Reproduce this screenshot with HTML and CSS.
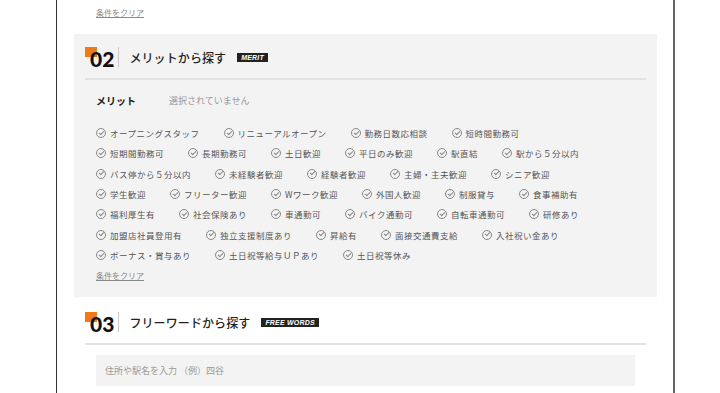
FILE: index.html
```html
<!DOCTYPE html>
<html>
<head>
  <meta charset="utf-8">
  <title>求人検索</title>
  <link rel="stylesheet" href="styles.css">
</head>
<body>
  <div class="page">
    <div class="prev-tail">
      <a class="clear-link" href="#">条件をクリア</a>
    </div>

    <section class="search-block is-gray">
      <div class="block-head">
        <span class="block-num">02</span>
        <h2 class="block-title">メリットから探す</h2>
        <span class="block-tag">MERIT</span>
      </div>
      <div class="block-body">
        <div class="picked">
          <span class="picked-label">メリット</span>
          <span class="picked-value">選択されていません</span>
        </div>
        <div class="check-list">
          <ul class="check-row">
            <li><i class="chk"></i>オープニングスタッフ</li>
            <li><i class="chk"></i>リニューアルオープン</li>
            <li><i class="chk"></i>勤務日数応相談</li>
            <li><i class="chk"></i>短時間勤務可</li>
          </ul>
          <ul class="check-row">
            <li><i class="chk"></i>短期間勤務可</li>
            <li><i class="chk"></i>長期勤務可</li>
            <li><i class="chk"></i>土日歓迎</li>
            <li><i class="chk"></i>平日のみ歓迎</li>
            <li><i class="chk"></i>駅直結</li>
            <li><i class="chk"></i>駅から５分以内</li>
          </ul>
          <ul class="check-row">
            <li><i class="chk"></i>バス停から５分以内</li>
            <li><i class="chk"></i>未経験者歓迎</li>
            <li><i class="chk"></i>経験者歓迎</li>
            <li><i class="chk"></i>主婦・主夫歓迎</li>
            <li><i class="chk"></i>シニア歓迎</li>
          </ul>
          <ul class="check-row">
            <li><i class="chk"></i>学生歓迎</li>
            <li><i class="chk"></i>フリーター歓迎</li>
            <li><i class="chk"></i>Wワーク歓迎</li>
            <li><i class="chk"></i>外国人歓迎</li>
            <li><i class="chk"></i>制服貸与</li>
            <li><i class="chk"></i>食事補助有</li>
          </ul>
          <ul class="check-row">
            <li><i class="chk"></i>福利厚生有</li>
            <li><i class="chk"></i>社会保険あり</li>
            <li><i class="chk"></i>車通勤可</li>
            <li><i class="chk"></i>バイク通勤可</li>
            <li><i class="chk"></i>自転車通勤可</li>
            <li><i class="chk"></i>研修あり</li>
          </ul>
          <ul class="check-row">
            <li><i class="chk"></i>加盟店社員登用有</li>
            <li><i class="chk"></i>独立支援制度あり</li>
            <li><i class="chk"></i>昇給有</li>
            <li><i class="chk"></i>面接交通費支給</li>
            <li><i class="chk"></i>入社祝い金あり</li>
          </ul>
          <ul class="check-row">
            <li><i class="chk"></i>ボーナス・賞与あり</li>
            <li><i class="chk"></i>土日祝等給与ＵＰあり</li>
            <li><i class="chk"></i>土日祝等休み</li>
          </ul>
        </div>
        <a class="clear-link bottom" href="#">条件をクリア</a>
      </div>
    </section>

    <section class="search-block">
      <div class="block-head">
        <span class="block-num">03</span>
        <h2 class="block-title">フリーワードから探す</h2>
        <span class="block-tag">FREE WORDS</span>
      </div>
      <div class="block-body">
        <input class="word-input" type="text" placeholder="住所や駅名を入力 （例）四谷">
      </div>
    </section>
  </div>
</body>
</html>
```

FILE: styles.css
```css
body {
  margin: 0;
  background: #fff;
  font-family: "Noto Sans CJK JP", "Noto Sans", sans-serif;
  color: #333;
}

.page {
  box-sizing: border-box;
  width: 619px;
  min-height: 100vh;
  margin-left: 56px;
  padding: 0 16px 0 17px;
  border-left: 1px solid #333;
  border-right: 2px solid #666;
}

.prev-tail {
  height: 34px;
  padding: 6px 0 0 22px;
  box-sizing: border-box;
}

.clear-link {
  display: block;
  width: max-content;
  font-size: 8px;
  line-height: 14px;
  color: #888;
  text-decoration: underline;
}

.search-block {
  padding: 13px 11px 14px;
}

.search-block.is-gray {
  background-color: #f3f3f3;
}

.search-block + .search-block {
  margin-top: 2px;
}

.block-head {
  display: flex;
  align-items: center;
  height: 20px;
  padding-bottom: 11px;
  border-bottom: 2px solid #e2e2e2;
}

.block-num {
  position: relative;
  z-index: 0;
  height: 20px;
  margin-left: 5px;
  padding-right: 4px;
  border-right: 1px solid #ccc;
  font-family: Lato, "Liberation Sans", sans-serif;
  font-weight: 900;
  font-size: 21px;
  line-height: 23px;
  color: #111;
}

.block-num::before {
  content: "";
  position: absolute;
  z-index: -1;
  left: -5px;
  top: 0;
  width: 12px;
  height: 10px;
  background-color: #ee7a1c;
}

.block-title {
  margin: 0 11px 0 10px;
  font-size: 12px;
  font-weight: 500;
  letter-spacing: 0.1px;
  color: #222;
}

.block-tag {
  padding: 0 4px;
  background-color: #222;
  color: #fff;
  font-family: "Liberation Sans", Arial, sans-serif;
  font-style: italic;
  font-weight: bold;
  font-size: 7px;
  line-height: 9px;
  letter-spacing: 0.2px;
}

.block-body {
  padding: 0 11px;
}

.picked {
  display: flex;
  margin-top: 11px;
  line-height: 20px;
}

.picked-label {
  width: 73px;
  font-size: 10px;
  font-weight: bold;
  color: #222;
}

.picked-value {
  font-size: 9px;
  color: #999;
}

.check-list {
  margin-top: 12px;
}

.check-row {
  display: flex;
  margin: 0;
  padding: 0;
  list-style: none;
}

.check-row li {
  display: flex;
  align-items: center;
  height: 20.3px;
  margin-right: 24px;
  font-size: 8.5px;
  letter-spacing: 0.5px;
  color: #555;
  white-space: nowrap;
}

.chk {
  position: relative;
  box-sizing: border-box;
  width: 10px;
  height: 10px;
  margin-right: 4px;
  border: 1px solid #888;
  border-radius: 50%;
}

.chk::after {
  content: "";
  position: absolute;
  left: 2px;
  top: 1.6px;
  width: 4px;
  height: 2px;
  border-left: 1px solid #888;
  border-bottom: 1px solid #888;
  transform: rotate(-45deg);
}

.clear-link.bottom {
  margin-top: 4px;
}

.word-input {
  display: block;
  box-sizing: border-box;
  width: 100%;
  height: 31px;
  margin-top: 10px;
  padding: 0 9px;
  border: none;
  background-color: #f3f3f3;
  font-family: "Noto Sans CJK JP", sans-serif;
  font-size: 9px;
  color: #333;
}

.word-input::placeholder {
  color: #999;
}
```
